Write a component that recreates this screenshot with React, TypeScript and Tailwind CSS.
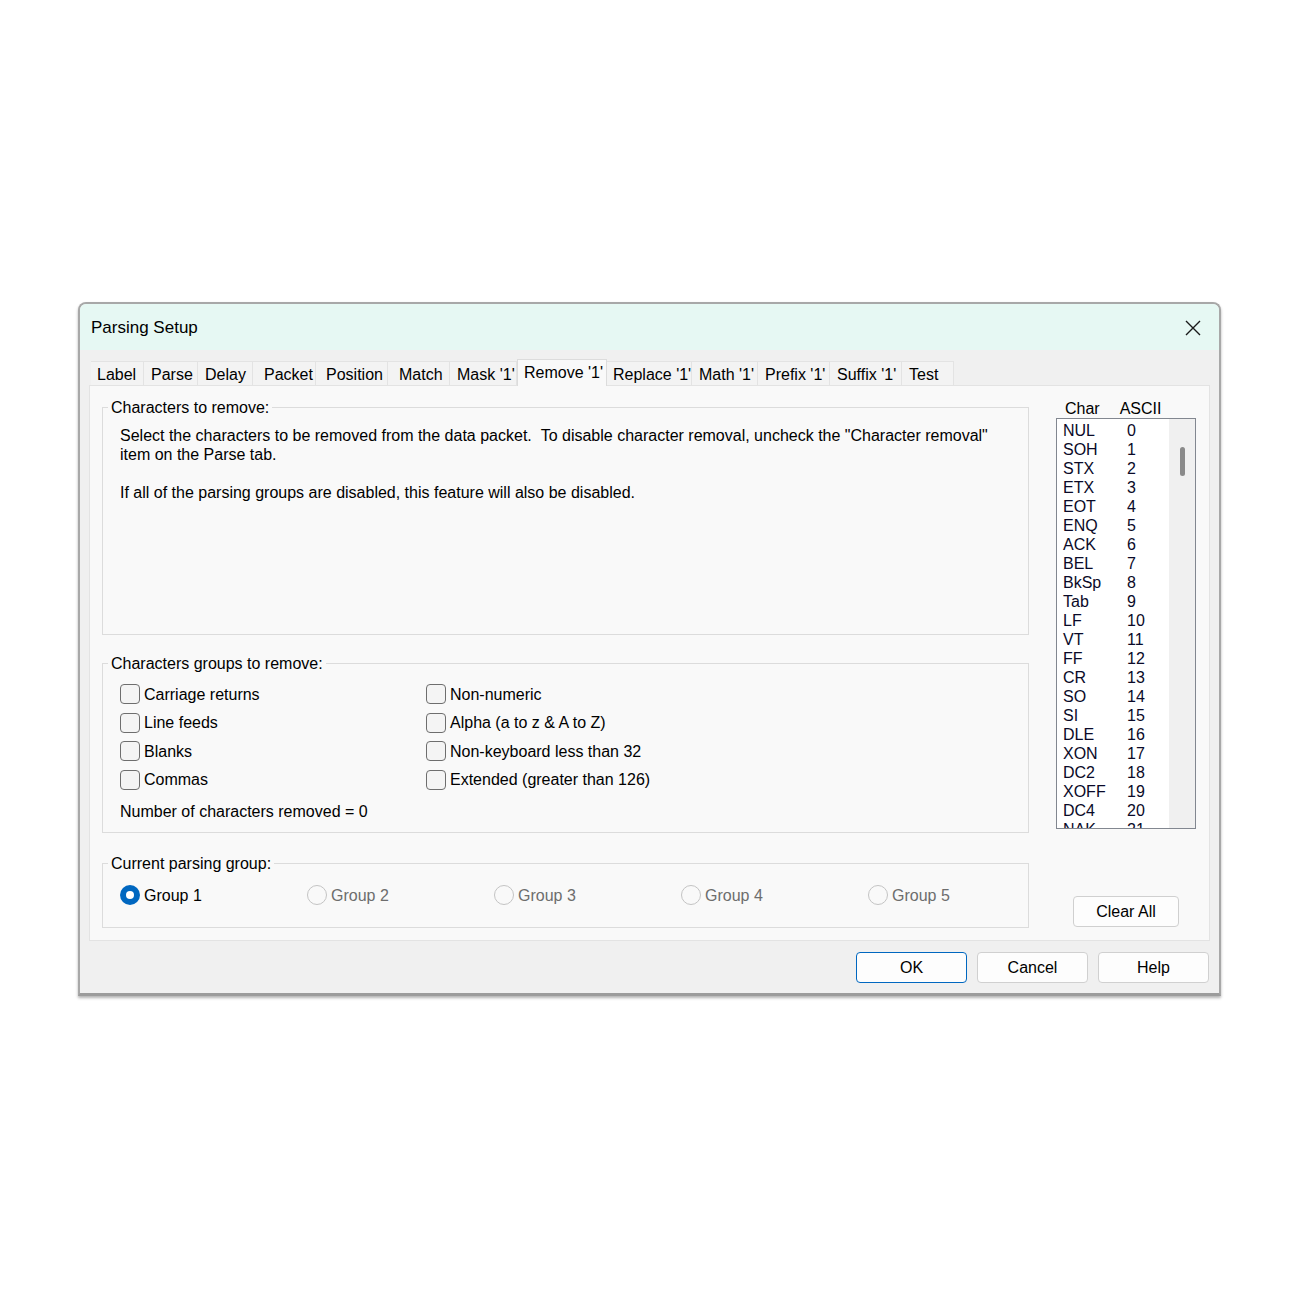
import React from "react";

const tabs: { label: string; w: number; pl: number; active?: boolean }[] = [
  { label: "Label", w: 53, pl: 6 },
  { label: "Parse", w: 54, pl: 7 },
  { label: "Delay", w: 55, pl: 7 },
  { label: "Packet", w: 63, pl: 11 },
  { label: "Position", w: 72, pl: 10 },
  { label: "Match", w: 62, pl: 11 },
  { label: "Mask '1'", w: 67, pl: 7 },
  { label: "Remove '1'", w: 90, pl: 7, active: true },
  { label: "Replace '1'", w: 85, pl: 6 },
  { label: "Math '1'", w: 66, pl: 7 },
  { label: "Prefix '1'", w: 72, pl: 7 },
  { label: "Suffix '1'", w: 72, pl: 7 },
  { label: "Test", w: 52, pl: 7 },
];

const chars: [string, number][] = [
  ["NUL", 0], ["SOH", 1], ["STX", 2], ["ETX", 3], ["EOT", 4], ["ENQ", 5],
  ["ACK", 6], ["BEL", 7], ["BkSp", 8], ["Tab", 9], ["LF", 10], ["VT", 11],
  ["FF", 12], ["CR", 13], ["SO", 14], ["SI", 15], ["DLE", 16], ["XON", 17],
  ["DC2", 18], ["XOFF", 19], ["DC4", 20], ["NAK", 21],
];

function Group({ label, className, children }: { label: string; className: string; children: React.ReactNode }) {
  return (
    <div className={"relative border border-[#dcdcdc] " + className}>
      <span className="absolute left-[5px] top-[-10px] bg-[#f9f9f9] px-[3px] leading-[19px]">{label}</span>
      {children}
    </div>
  );
}

function Check({ label }: { label: string }) {
  return (
    <div className="flex h-[28.5px] items-center">
      <span className="h-[20px] w-[20px] shrink-0 rounded-[4px] border border-[#6e6e6e] bg-[#f4f4f4]" />
      <span className="ml-[4px] leading-[19px]">{label}</span>
    </div>
  );
}

function Radio({ label, checked }: { label: string; checked?: boolean }) {
  return (
    <div className="flex h-[20px] w-[187px] shrink-0 items-center">
      {checked ? (
        <span className="flex h-[20px] w-[20px] shrink-0 items-center justify-center rounded-full bg-[#0067c0]">
          <span className="h-[8px] w-[8px] rounded-full bg-white" />
        </span>
      ) : (
        <span className="h-[20px] w-[20px] shrink-0 rounded-full border border-[#c4c4c4] bg-[#f9f9f9]" />
      )}
      <span className={"ml-[4px] leading-[19px] " + (checked ? "text-black" : "text-[#6d6d6d]")}>{label}</span>
    </div>
  );
}

export default function App() {
  return (
    <div
      className="h-[1300px] w-[1300px] bg-white pl-[78px] pt-[302px] text-[16px] text-black"
      style={{ fontFamily: '"Liberation Sans", Arial, sans-serif' }}
    >
      <div className="flex h-[694px] w-[1143px] flex-col overflow-hidden rounded-t-[8px] border-2 border-[#a8a8a8] border-b-[3px] border-b-[#9c9c9c] bg-[#f0f0f0] shadow-[0_2px_3px_rgba(0,0,0,0.3)]">
        {/* title bar */}
        <div className="flex h-[46px] items-center justify-between bg-[#e6f8f3] pl-[11px] pr-[16px] pt-[1px]">
          <span className="text-[17px] leading-[22px]">Parsing Setup</span>
          <svg width="18" height="18" viewBox="0 0 18 18" className="mr-[1px]">
            <path d="M2 2 L16 16 M16 2 L2 16" stroke="#1a1a1a" strokeWidth="1.4" fill="none" />
          </svg>
        </div>

        <div className="flex flex-1 flex-col px-[9px] pt-[11px]">
          {/* tabs */}
          <div className="relative z-10 flex h-[24px] items-end pl-[2px]">
            {tabs.map((t) =>
              t.active ? (
                <div
                  key={t.label}
                  className="mb-[-1px] flex h-[27px] shrink-0 items-start whitespace-nowrap border border-b-0 border-[#dcdcdc] bg-[#f9f9f9] pt-[3px] leading-[19px]"
                  style={{ width: t.w, paddingLeft: t.pl - 1 }}
                >
                  {t.label}
                </div>
              ) : (
                <div
                  key={t.label}
                  className="flex h-[24px] shrink-0 items-center whitespace-nowrap border-r border-t border-[#e3e3e3] bg-[#f3f3f3] pt-[2px] leading-[19px]"
                  style={{ width: t.w, paddingLeft: t.pl }}
                >
                  {t.label}
                </div>
              )
            )}
          </div>

          {/* tab page */}
          <div className="flex h-[556px] border border-[#e3e3e3] bg-[#f9f9f9] pl-[12px] pr-[10px]">
            <div className="flex w-[927px] flex-col pt-[21px]">
              <Group label="Characters to remove:" className="h-[228px] pl-[17px] pt-[18px]">
                <p className="leading-[19px]">
                  Select the characters to be removed from the data packet.&nbsp;&nbsp;To disable character removal, uncheck the "Character removal"
                  <br />
                  item on the Parse tab.
                  <br />
                  <br />
                  If all of the parsing groups are disabled, this feature will also be disabled.
                </p>
              </Group>

              <Group label="Characters groups to remove:" className="mt-[28px] h-[170px] pl-[17px] pt-[16px]">
                <div className="flex">
                  <div className="w-[306px] shrink-0">
                    <Check label="Carriage returns" />
                    <Check label="Line feeds" />
                    <Check label="Blanks" />
                    <Check label="Commas" />
                  </div>
                  <div>
                    <Check label="Non-numeric" />
                    <Check label="Alpha (a to z & A to Z)" />
                    <Check label="Non-keyboard less than 32" />
                    <Check label="Extended (greater than 126)" />
                  </div>
                </div>
                <div className="mt-[8px] leading-[19px]">Number of characters removed = 0</div>
              </Group>

              <Group label="Current parsing group:" className="mt-[30px] h-[65px] pl-[17px] pt-[21px]">
                <div className="flex">
                  <Radio label="Group 1" checked />
                  <Radio label="Group 2" />
                  <Radio label="Group 3" />
                  <Radio label="Group 4" />
                  <Radio label="Group 5" />
                </div>
              </Group>
            </div>

            <div className="ml-[27px] flex w-[140px] flex-col pt-[12px]">
              <div className="flex h-[20px] items-center leading-[19px]">
                <span className="ml-[9px]">Char</span>
                <span className="ml-[20px]">ASCII</span>
              </div>
              <div className="flex h-[411px] overflow-hidden border border-[#828790] bg-white">
                <div className="flex-1 pt-[2px]">
                  {chars.map(([c, n]) => (
                    <div key={c} className="flex h-[19px] items-center leading-[19px] text-[#0a0a28]">
                      <span className="ml-[6px] w-[64px]">{c}</span>
                      <span>{n}</span>
                    </div>
                  ))}
                </div>
                <div className="flex w-[26px] justify-center bg-[#f0f0f0] pt-[28px]">
                  <div className="ml-[1px] h-[29px] w-[5px] rounded-full bg-[#8a8a8a]" />
                </div>
              </div>
              <button className="ml-[17px] mt-[67px] h-[31px] w-[106px] rounded-[4px] border border-[#d0d0d0] bg-[#fdfdfd] leading-[19px]">
                Clear All
              </button>
            </div>
          </div>

          {/* buttons */}
          <div className="mt-[11px] flex justify-end gap-[10px] pr-[1px]">
            <button className="h-[31px] w-[111px] rounded-[4px] border border-[#0067c0] bg-[#fdfdfd] leading-[19px]">OK</button>
            <button className="h-[31px] w-[111px] rounded-[4px] border border-[#d0d0d0] bg-[#fdfdfd] leading-[19px]">Cancel</button>
            <button className="h-[31px] w-[111px] rounded-[4px] border border-[#d0d0d0] bg-[#fdfdfd] leading-[19px]">Help</button>
          </div>
        </div>
      </div>
    </div>
  );
}
